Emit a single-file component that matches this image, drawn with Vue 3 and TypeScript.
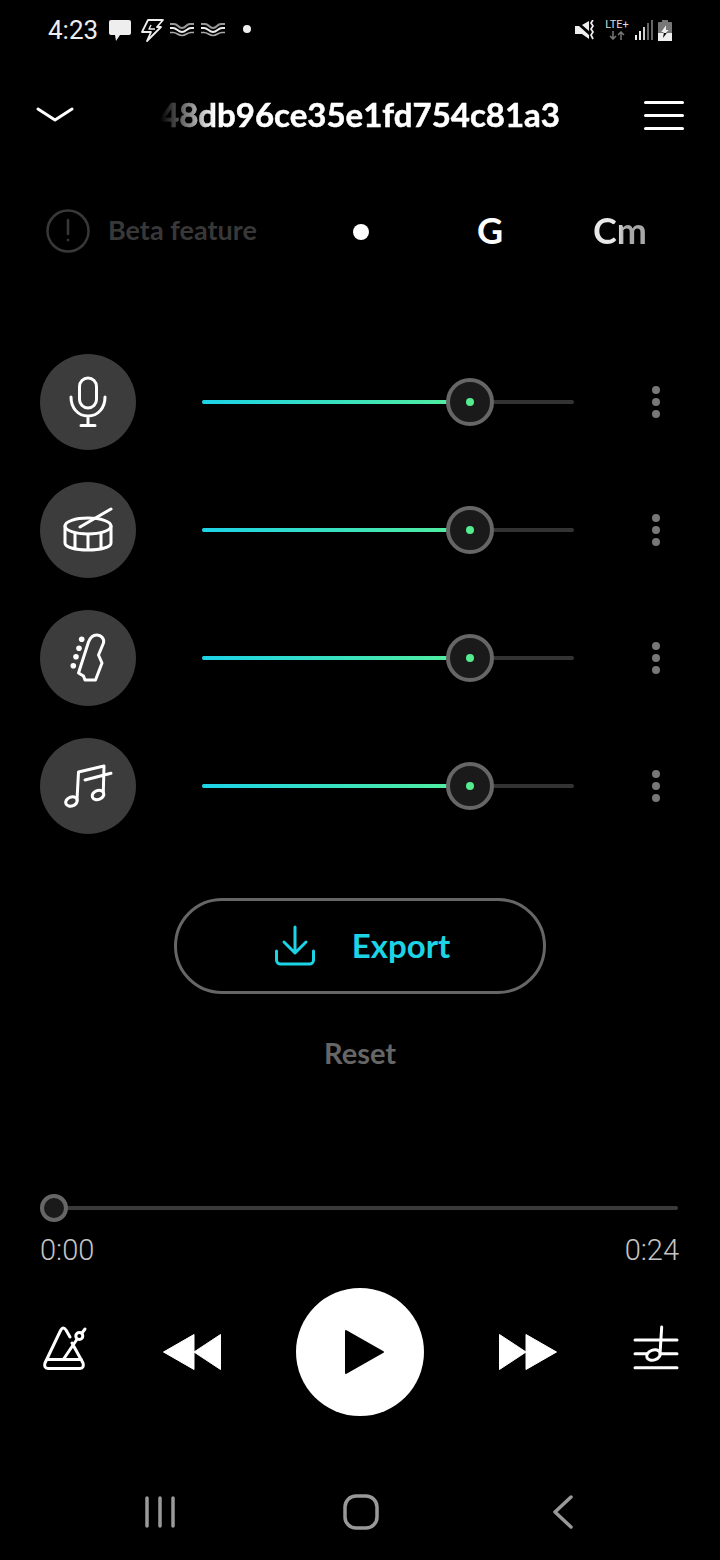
<template>
  <div class="screen">
    <div class="status">
      <span class="clock">4:23</span>
      <svg class="st-msg" width="22" height="22" viewBox="0 0 22 22">
        <path d="M2 0h18a2 2 0 0 1 2 2v11a2 2 0 0 1-2 2H11l-4 6-1-6H2a2 2 0 0 1-2-2V2a2 2 0 0 1 2-2z" fill="#eee" />
      </svg>
      <svg class="st-bolt" width="24" height="23" viewBox="0 0 24 23" fill="none" stroke="#eee" stroke-width="1.8" stroke-linejoin="round">
        <path d="M8 1h15l-6 7h4L7 22l4-9H2z" />
        <path d="M11 6l-2 4h6" stroke-width="1.4" />
      </svg>
      <svg v-for="n in 2" :key="n" class="st-wave" width="24" height="14" viewBox="0 0 24 14" fill="none">
        <path d="M0 1h4c4 0 4 4 8 4s4-4 8-4h4" stroke="#999" stroke-width="2" />
        <path d="M0 5h3c4 0 5 4 9 4s5-4 9-4h3" stroke="#eee" stroke-width="2" />
        <path d="M0 9.500h3c4 0 5 3 9 3s5-3 9-3h3" stroke="#aaa" stroke-width="1.600" />
      </svg>
      <span class="st-dot"></span>
      <div class="status-right">
        <svg width="22" height="20" viewBox="0 0 22 20">
          <path d="M0 6h4l10 9v4l-7-5H0zM7 5l7-4v10z" fill="#eee" />
          <path d="M18 0l-2 3 2 3-2 3 2 3-2 3 2 4" fill="none" stroke="#eee" stroke-width="1.700" />
        </svg>
        <div class="lte">
          <span>LTE+</span>
          <svg width="16" height="9" viewBox="0 0 16 9" fill="none" stroke="#777" stroke-width="1.500">
            <path d="M4 0v8M1 5l3 3 3-3M12 9V1M9 4l3-3 3 3" />
          </svg>
        </div>
        <svg width="18" height="20" viewBox="0 0 18 20">
          <rect x="0" y="15" width="2" height="5" fill="#eee" />
          <rect x="4" y="11" width="2" height="9" fill="#eee" />
          <rect x="8" y="7" width="2" height="13" fill="#ccc" />
          <rect x="12" y="3" width="2" height="17" fill="#666" />
          <rect x="16" y="0" width="2" height="20" fill="#666" />
        </svg>
        <svg width="14" height="21" viewBox="0 0 14 21">
          <path d="M4 0h6v2h3a1 1 0 0 1 1 1v10H0V3a1 1 0 0 1 1-1h3z" fill="#777" />
          <path d="M0 13h14v8H0z" fill="#eee" />
          <path d="M8 5L3 12h3l-1 6 6-8H8z" fill="#000" />
          <path d="M8 5L3 12h3l-1 1h3l3-3H8z" fill="#eee" />
        </svg>
      </div>
    </div>

    <header class="topbar">
      <svg class="chev" width="38" height="16" viewBox="0 0 38 16" fill="none" stroke="#fff" stroke-width="3" stroke-linecap="round" stroke-linejoin="round">
        <path d="M2 2l17 11L36 2" />
      </svg>
      <div class="title"><span>48db96ce35e1fd754c81a3</span></div>
      <div class="menu"><i></i><i></i><i></i></div>
    </header>

    <div class="beta-row">
      <div class="beta">
        <svg width="44" height="44" viewBox="0 0 44 44" fill="none" stroke="#383838" stroke-width="2.500">
          <circle cx="22" cy="22" r="20.500" />
          <path d="M22 11v14" stroke-linecap="round" />
          <circle cx="22" cy="31" r="1" fill="#383838" stroke-width="1" />
        </svg>
        <span>Beta feature</span>
      </div>
      <div class="chord"><span class="chord-dot"></span></div>
      <div class="chord chord-g">G</div>
      <div class="chord chord-fade">Cm</div>
    </div>

    <div class="stems">
      <div v-for="stem in stems" :key="stem.name" class="stem">
        <div class="stem-icon">
          <svg width="96" height="96" viewBox="0 0 96 96" fill="none" stroke="#fff" stroke-width="3" stroke-linecap="round" stroke-linejoin="round">
            <template v-if="stem.name === 'vocals'">
              <rect x="39.500" y="24" width="17" height="30" rx="8.500" />
              <path d="M31 43c0 11 7 19 17 19s17-8 17-19M48 62v9M41 71.500h14" />
            </template>
            <template v-else-if="stem.name === 'drums'">
              <ellipse cx="48" cy="44" rx="23" ry="8" />
              <path d="M25 44v17c0 4 10 7 23 7s23-3 23-7V44M35 51v15M48 53v15M61 51v15M40 45l31-18" />
            </template>
            <template v-else-if="stem.name === 'guitar'">
              <path d="M38.500 63l10-31c2-5 5-7 8-7 5 0 8 4 7 8l-5 12 3.500 8-6.500 17H45l-1.500-4z" />
              <g fill="#fff" stroke="none">
                <circle cx="41.700" cy="29.300" r="2.800" />
                <circle cx="39" cy="38.300" r="2.800" />
                <circle cx="36" cy="46.700" r="2.800" />
                <circle cx="33.300" cy="55.700" r="2.800" />
              </g>
            </template>
            <template v-else>
              <path d="M37 62l1.500-28L64 28l-.700 26M45 42l26-6.700" />
              <ellipse cx="31.500" cy="63.500" rx="6" ry="4.500" transform="rotate(-22 31.500 63.500)" />
              <ellipse cx="58" cy="57" rx="6" ry="4.500" transform="rotate(-22 58 57)" />
            </template>
          </svg>
        </div>
        <div class="slider">
          <div class="slider-fill" :style="{ width: stem.level + '%' }"></div>
          <div class="knob" :style="{ left: stem.level + '%' }"><b></b></div>
        </div>
        <div class="more"><i></i><i></i><i></i></div>
      </div>
    </div>

    <button class="export">
      <svg width="44" height="44" viewBox="0 0 44 44" fill="none" stroke="#1dd3e6" stroke-width="3" stroke-linecap="round" stroke-linejoin="round">
        <path d="M22 3v26M11 18l11 11 11-11M3.500 27v9a4 4 0 0 0 4 4h29a4 4 0 0 0 4-4v-9" />
      </svg>
      <span>Export</span>
    </button>
    <div class="reset">Reset</div>

    <div class="progress"><div class="progress-thumb"></div></div>
    <div class="times"><span>0:00</span><span>0:24</span></div>

    <div class="controls">
      <div class="ctl">
        <svg width="56" height="56" viewBox="0 0 56 56" fill="none" stroke="#fff" stroke-width="3" stroke-linecap="round" stroke-linejoin="round">
          <path d="M27.300 4c-1.500 0-2 1-3 3L9 39c-1 3 0 5.500 3 5.500h32c3 0 4-2.500 3-5.500L36 19M34 13l-4-7c-1-1.500-1.500-2-2.700-2M11.500 35.500h34M27.300 35.500L40.500 16" />
          <circle cx="43.300" cy="12" r="3.500" />
          <path d="M46 9l3-4" />
        </svg>
      </div>
      <div class="ctl">
        <svg width="64" height="40" viewBox="0 0 64 40" fill="#fff" stroke="#fff" stroke-width="1" stroke-linejoin="round">
          <path d="M3.500 20L34 2.500v35zM34 20L60.500 2.500v35z" />
        </svg>
      </div>
      <div class="play">
        <svg width="44" height="48" viewBox="0 0 44 48" fill="#000" stroke="#000" stroke-width="2" stroke-linejoin="round">
          <path d="M5 3v42l37-21z" />
        </svg>
      </div>
      <div class="ctl">
        <svg width="64" height="40" viewBox="0 0 64 40" fill="#fff" stroke="#fff" stroke-width="1" stroke-linejoin="round">
          <path d="M3.500 2.500v35L30 20zM30 2.500v35L60.500 20z" />
        </svg>
      </div>
      <div class="ctl">
        <svg width="56" height="56" viewBox="0 0 56 56" fill="none" stroke="#fff" stroke-width="3" stroke-linecap="round">
          <path d="M7 16h42M7 29.700h42M7 43.700h42" />
          <ellipse cx="25.500" cy="31" rx="7" ry="5" transform="rotate(-20 25.500 31)" fill="#000" />
          <path d="M33.700 3L32 30" />
        </svg>
      </div>
    </div>

    <nav class="softkeys">
      <div class="key">
        <svg width="32" height="32" viewBox="0 0 32 32" stroke="#999" stroke-width="3.500" stroke-linecap="round">
          <path d="M3 2v28M16 2v28M29 2v28" />
        </svg>
      </div>
      <div class="key key-home">
        <svg width="36" height="36" viewBox="0 0 36 36" fill="none" stroke="#999" stroke-width="3.500">
          <rect x="2" y="2" width="32" height="32" rx="11" />
        </svg>
      </div>
      <div class="key key-back">
        <svg width="22" height="34" viewBox="0 0 22 34" fill="none" stroke="#999" stroke-width="3.500" stroke-linecap="round" stroke-linejoin="round">
          <path d="M19 2L3 17l16 15" />
        </svg>
      </div>
    </nav>
  </div>
</template>

<script setup lang="ts">
interface Stem {
  name: string;
  level: number;
}

const stems: Stem[] = [
  { name: "vocals", level: 72 },
  { name: "drums", level: 72 },
  { name: "guitar", level: 72 },
  { name: "other", level: 72 },
];
</script>

<style>
html,
body {
  background: #000;
}
</style>

<style scoped>
.screen {
  width: 720px;
  height: 1560px;
  background: #000;
  color: #fff;
  font-family: Lato, "Open Sans", sans-serif;
  overflow: hidden;
}

.status {
  height: 60px;
  padding: 0 48px;
  box-sizing: border-box;
  display: flex;
  align-items: center;
}
.clock {
  font-family: Roboto, sans-serif;
  font-size: 26px;
  color: #eee;
  width: 61px;
}
.st-msg {
  margin-right: 9px;
  margin-top: 2px;
}
.st-bolt {
  margin-right: 6px;
}
.st-wave {
  margin-right: 7px;
}
.st-dot {
  width: 8px;
  height: 8px;
  border-radius: 50%;
  background: #eee;
  margin-left: 11px;
  margin-top: -2px;
}
.status-right {
  margin-left: auto;
  display: flex;
  align-items: center;
  gap: 5px;
}
.lte {
  display: flex;
  flex-direction: column;
  align-items: center;
  gap: 1px;
  width: 26px;
  margin: -1px 0 0 2px;
  font-family: Roboto, sans-serif;
  font-size: 11px;
  line-height: 10px;
  color: #ddd;
}

.topbar {
  height: 110px;
  padding: 0 36px 1px;
  display: flex;
  align-items: center;
  box-sizing: border-box;
}
.chev {
  flex: none;
  margin-top: 1px;
}
.title {
  width: 400px;
  margin: -2px 0 0 86px;
  flex: none;
  display: flex;
  justify-content: flex-end;
  overflow: hidden;
  white-space: nowrap;
  font-size: 33px;
  font-weight: 700;
  -webkit-text-stroke: 0.5px #fff;
  -webkit-mask-image: linear-gradient(to right, transparent 0, #000 55px);
  mask-image: linear-gradient(to right, transparent 0, #000 55px);
}
.menu {
  margin-left: auto;
  width: 40px;
  display: flex;
  flex-direction: column;
  gap: 10px;
  margin-top: 1px;
}
.menu i {
  height: 3px;
  background: #fff;
  border-radius: 2px;
}

.beta-row {
  height: 122px;
  display: flex;
  align-items: center;
  box-sizing: border-box;
  padding-left: 46px;
}
.beta {
  width: 250px;
  display: flex;
  align-items: center;
  gap: 18px;
  font-size: 27px;
  font-weight: 700;
  line-height: 36px;
  color: #383838;
}
.beta span {
  margin-top: -2px;
}
.chord {
  width: 130px;
  text-align: center;
  font-size: 36px;
  font-weight: 700;
  line-height: 44px;
  margin-top: -3px;
}
.chord-g {
  padding-right: 2px;
  box-sizing: border-box;
}
.chord-dot {
  display: block;
  width: 16px;
  height: 16px;
  margin: 5px auto 0;
  border-radius: 50%;
  background: #fff;
}
.chord-fade {
  background: linear-gradient(to right, #e8e8e8 45%, #a8a8a8 60%);
  background-clip: text;
  -webkit-background-clip: text;
  color: transparent;
  width: 53px;
  margin-left: 37px;
}

.stems {
  margin-top: 62px;
  padding-left: 40px;
  display: flex;
  flex-direction: column;
  gap: 32px;
}
.stem {
  display: flex;
  align-items: center;
  height: 96px;
}
.stem-icon {
  width: 96px;
  height: 96px;
  border-radius: 50%;
  background: #3c3c3c;
}
.stem-icon svg {
  display: block;
}
.slider {
  position: relative;
  width: 372px;
  height: 4px;
  margin-left: 66px;
  background: #333;
  border-radius: 2px;
}
.slider-fill {
  height: 100%;
  border-radius: 2px;
  background: linear-gradient(to right, #1dd3e6, #55ee9a);
}
.knob {
  position: absolute;
  top: 2px;
  width: 48px;
  height: 48px;
  box-sizing: border-box;
  transform: translate(-50%, -50%);
  border: 4px solid #666;
  border-radius: 50%;
  background: #1a1a1a;
  display: flex;
  align-items: center;
  justify-content: center;
}
.knob b {
  width: 8px;
  height: 8px;
  border-radius: 50%;
  background: #55eb8e;
}
.more {
  margin-left: 78px;
  display: flex;
  flex-direction: column;
  gap: 4px;
}
.more i {
  width: 8px;
  height: 8px;
  border-radius: 50%;
  background: #777;
}

.export {
  display: flex;
  align-items: center;
  justify-content: center;
  gap: 35px;
  width: 372px;
  height: 96px;
  margin: 64px 0 0 174px;
  padding: 0 0 0 3px;
  box-sizing: border-box;
  border: 3px solid #666;
  border-radius: 48px;
  background: none;
  color: #1dd3e6;
  font-family: inherit;
  font-size: 33px;
  font-weight: 700;
}
.export span {
  margin-top: -3px;
}
.reset {
  margin-top: 39px;
  height: 40px;
  line-height: 40px;
  text-align: center;
  font-size: 29px;
  font-weight: 700;
  color: #666;
}

.progress {
  position: relative;
  height: 4px;
  margin: 133px 42px 0 40px;
  background: #3a3a3a;
  border-radius: 2px;
}
.progress-thumb {
  position: absolute;
  left: 0;
  top: -12px;
  width: 28px;
  height: 28px;
  box-sizing: border-box;
  border: 4px solid #666;
  border-radius: 50%;
  background: #1a1a1a;
}
.times {
  margin-top: 22px;
  padding: 0 41px 0 40px;
  display: flex;
  justify-content: space-between;
  font-family: Roboto, sans-serif;
  font-size: 29px;
  font-weight: 300;
  line-height: 36px;
  color: #c4c4c4;
}

.controls {
  margin-top: 20px;
  display: flex;
  align-items: center;
  height: 128px;
}
.ctl {
  width: 128px;
  display: flex;
  justify-content: center;
}
.play {
  width: 128px;
  height: 128px;
  margin: 0 40px;
  border-radius: 50%;
  background: #fff;
  display: flex;
  align-items: center;
  justify-content: center;
  padding-left: 6px;
  box-sizing: border-box;
}

.softkeys {
  margin-top: 64px;
  height: 64px;
  padding-left: 60px;
  display: flex;
  align-items: center;
}
.key {
  width: 200px;
  display: flex;
  justify-content: center;
}
.key svg {
  display: block;
}
.key-home {
  padding-left: 2px;
  box-sizing: border-box;
}
.key-back {
  padding-left: 6px;
  box-sizing: border-box;
}
</style>
